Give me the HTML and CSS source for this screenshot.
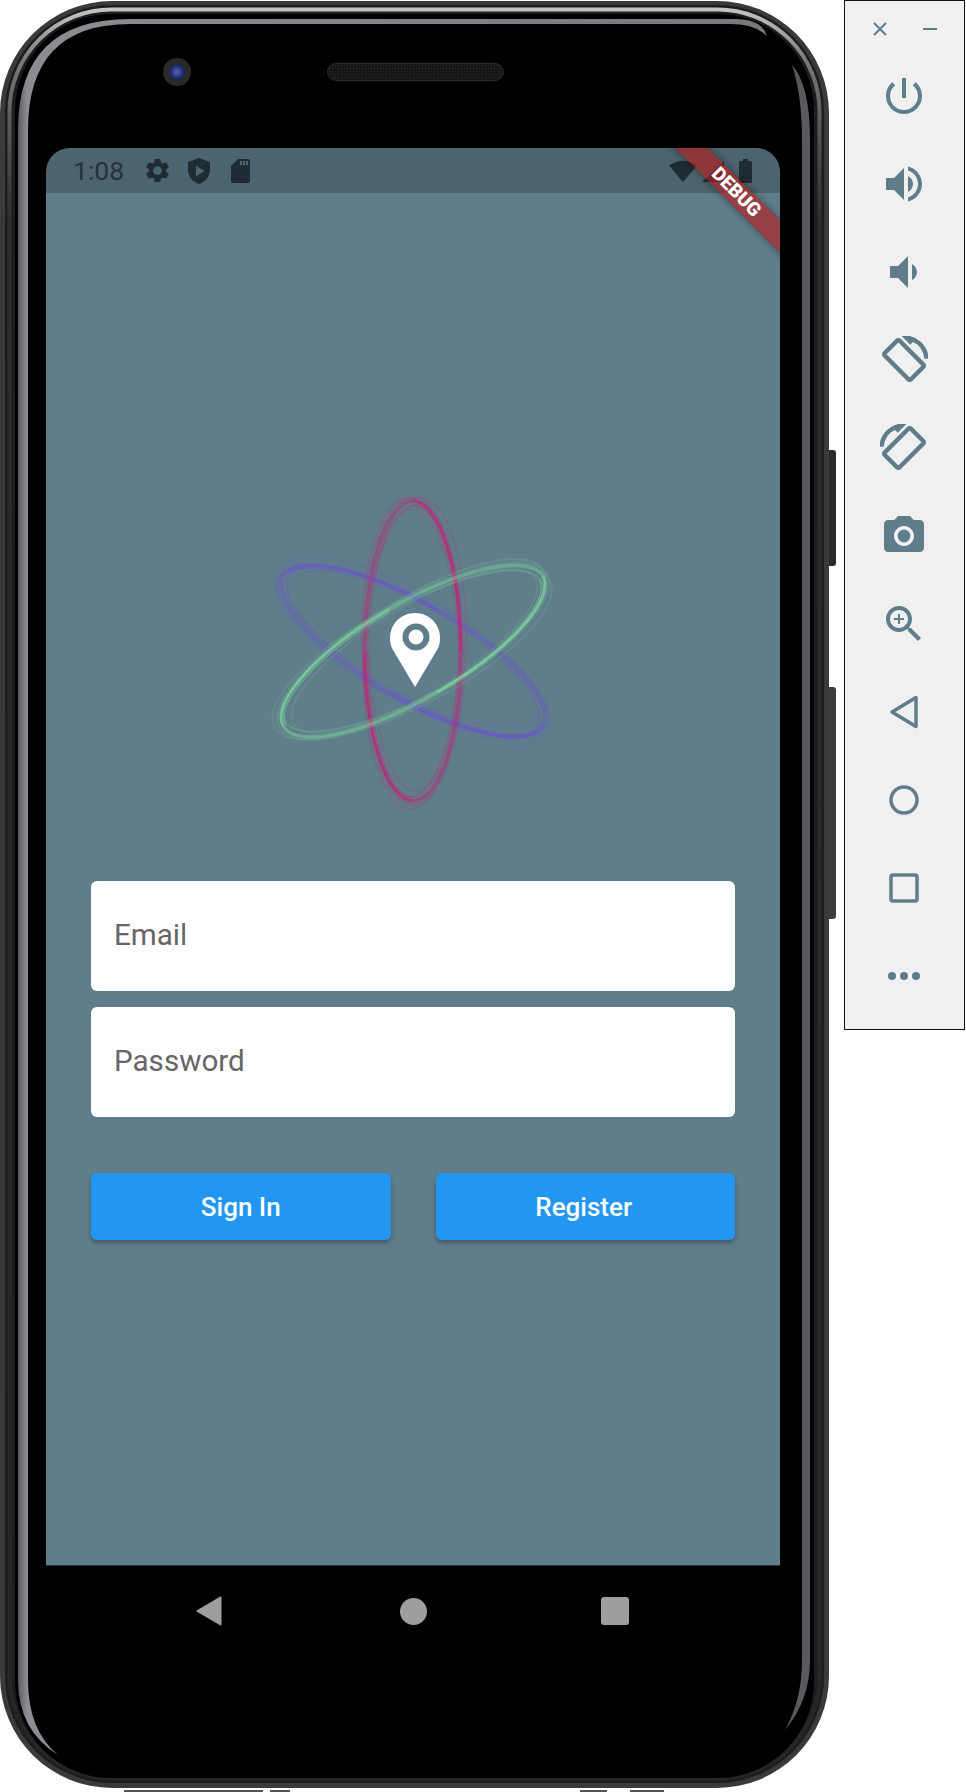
FILE: index.html
```html
<!DOCTYPE html>
<html lang="en">

<head>
  <meta charset="UTF-8">
  <meta name="viewport" content="width=device-width, initial-scale=1.0">
  <title>Login</title>
  <link rel="stylesheet" href="styles.css">
</head>

<body>
  <div class="phone">
    <span class="side-btn side-btn-power"></span>
    <span class="side-btn side-btn-volume"></span>
    <div class="ports">
      <span class="port port-long"></span>
      <span class="port"></span>
      <span class="port port-gap"></span>
      <span class="port port-last"></span>
    </div>

    <!-- Phone body and its edge highlights -->
    <svg class="bezel" width="830" height="1790" viewBox="0 0 830 1790">
      <defs>
        <linearGradient id="edge" x1="0" y1="0" x2="0" y2="1">
          <stop offset="0" stop-color="#c4c4c8" />
          <stop offset="0.03" stop-color="#77777b" />
          <stop offset="0.12" stop-color="#2c2c2c" />
          <stop offset="1" stop-color="#262626" />
        </linearGradient>
        <linearGradient id="rim" x1="0" y1="0" x2="1" y2="0">
          <stop offset="0" stop-color="#5c5c60" />
          <stop offset="0.012" stop-color="#8c8c92" />
          <stop offset="1" stop-color="#78787c" />
        </linearGradient>
      </defs>
      <rect x="0" y="1" width="829" height="1787" rx="112" fill="#3a3a3a" />
      <rect x="5" y="5" width="819" height="1778" rx="107" fill="#1d1d1d" />
      <rect x="9.5" y="9.5" width="810" height="1769" rx="102" fill="none" stroke="url(#edge)" stroke-width="4" />
      <rect x="15" y="14" width="799" height="1764" rx="96" fill="#000" />
      <path fill="url(#rim)" d="M18 1680V130Q18 19 130 19H735Q762 19 767 36Q755 24 730 24H130Q28 24 28 130V1680Q28 1730 58 1755Q18 1730 18 1680Z" />
      <path fill="#5a5a5e" d="M792 65Q810 85 810 140V1660Q810 1700 785 1730Q802 1700 802 1660V140Q802 95 792 65Z" />
    </svg>

    <div class="phone-top">
      <div class="camera"><span class="lens"></span></div>
      <div class="speaker"></div>
    </div>

    <div class="screen">
      <div class="status-bar">
        <span class="time">1:08</span>
        <svg class="status-icon gear" viewBox="0 0 24 24">
          <path d="M19.14 12.94c.04-.3.06-.61.06-.94 0-.32-.02-.64-.07-.94l2.03-1.58c.18-.14.23-.41.12-.61l-1.92-3.32c-.12-.22-.37-.29-.59-.22l-2.39.96c-.5-.38-1.03-.7-1.62-.94l-.36-2.54c-.04-.24-.24-.41-.48-.41h-3.84c-.24 0-.43.17-.47.41l-.36 2.54c-.59.24-1.13.57-1.62.94l-2.39-.96c-.22-.08-.47 0-.59.22L2.74 8.87c-.12.21-.08.47.12.61l2.03 1.58c-.05.3-.09.63-.09.94s.02.64.07.94l-2.03 1.58c-.18.14-.23.41-.12.61l1.92 3.32c.12.22.37.29.59.22l2.39-.96c.5.38 1.03.7 1.62.94l.36 2.54c.05.24.24.41.48.41h3.84c.24 0 .44-.17.47-.41l.36-2.54c.59-.24 1.13-.56 1.62-.94l2.39.96c.22.08.47 0 .59-.22l1.92-3.32c.12-.22.07-.47-.12-.61l-2.01-1.58zM12 15.6c-1.98 0-3.6-1.62-3.6-3.6s1.62-3.6 3.6-3.6 3.6 1.62 3.6 3.6-1.62 3.6-3.6 3.6z" />
        </svg>
        <svg class="status-icon shield" viewBox="0 0 22 26">
          <path fill-rule="evenodd" d="M11 0L22 4V12C22 19 17 24 11 26C5 24 0 19 0 12V4ZM8 7.5V18.5L16.5 13Z" />
        </svg>
        <svg class="status-icon sd" viewBox="0 0 19 24">
          <path fill-rule="evenodd" d="M7 0H17Q19 0 19 2V22Q19 24 17 24H2Q0 24 0 22V7ZM9 2V6H11V2ZM12 2V6H14V2ZM15 2V6H17V2Z" />
        </svg>
        <div class="status-right">
          <svg class="status-icon wifi" viewBox="0 0 28 22">
            <path d="M0 5.500Q14 -4 28 5.500L14 22Z" />
          </svg>
          <svg class="status-icon signal" viewBox="0 0 22 22">
            <path d="M0 22L22 1V22Z" />
          </svg>
          <svg class="status-icon battery" viewBox="0 0 13 24">
            <path d="M4 0H9V2H11.500Q13 2 13 3.500V22.500Q13 24 11.500 24H1.500Q0 24 0 22.500V3.500Q0 2 1.500 2H4Z" />
          </svg>
        </div>
      </div>

      <div class="banner">DEBUG</div>

      <div class="content">
        <svg class="logo" width="320" height="330" viewBox="0 0 320 330">
          <defs>
            <g id="orbit" fill="none">
              <ellipse cx="160" cy="165" rx="50" ry="154" stroke-opacity="0.14" stroke-width="3" />
              <ellipse cx="162" cy="167" rx="51" ry="156" stroke-opacity="0.14" stroke-width="2" transform="rotate(2 160 165)" />
              <ellipse cx="158" cy="163" rx="49" ry="151" stroke-opacity="0.18" stroke-width="2" transform="rotate(-1.500 160 165)" />
              <ellipse cx="160" cy="165" rx="46" ry="146" stroke-opacity="0.22" stroke-width="2" transform="rotate(1.500 160 165)" />
              <ellipse cx="161" cy="164" rx="44" ry="141" stroke-opacity="0.16" stroke-width="1.500" transform="rotate(-1 160 165)" />
              <ellipse cx="160" cy="165" rx="48" ry="150" stroke-opacity="0.4" stroke-width="3.500" />
              <ellipse cx="160" cy="165" rx="48" ry="150" stroke-opacity="0.55" stroke-width="2" pathLength="100" stroke-dasharray="25 25" stroke-dashoffset="25" />
              <ellipse cx="161" cy="166" rx="46" ry="146" stroke-opacity="0.55" stroke-width="1" pathLength="100" stroke-dasharray="25 25" stroke-dashoffset="25" />
            </g>
          </defs>
          <use href="#orbit" class="orbit-purple" transform="rotate(-60 160 165)" />
          <use href="#orbit" class="orbit-pink" />
          <use href="#orbit" class="orbit-green" transform="rotate(60 160 165)" />
          <path fill="#fff" d="M162 127C148 127 137 138 137 152C137 157 138 160 140 164L162 201L184 164C186 160 187 157 187 152C187 138 176 127 162 127Z" />
          <circle cx="163" cy="151" r="10.500" fill="#fff" stroke="#607d8b" stroke-width="6" />
        </svg>

        <form class="login-form">
          <input class="field" type="text" placeholder="Email">
          <input class="field" type="password" placeholder="Password">
          <div class="actions">
            <button class="action" type="button">Sign In</button>
            <button class="action" type="button">Register</button>
          </div>
        </form>
      </div>
    </div>

    <div class="nav-bar">
      <svg class="nav-icon nav-back" viewBox="0 0 26 30">
        <path d="M24.500 1.500V28.500L1.500 15Z" stroke="#9e9e9e" stroke-width="2" stroke-linejoin="round" />
      </svg>
      <span class="nav-home"></span>
      <span class="nav-recent"></span>
    </div>
  </div>

  <div class="toolbar">
    <div class="toolbar-head">
      <svg class="tool-small" viewBox="0 0 16 16">
        <path d="M2 2L14 14M14 2L2 14" />
      </svg>
      <svg class="tool-small" viewBox="0 0 16 16">
        <path d="M1 8H15" />
      </svg>
    </div>
    <svg class="tool" viewBox="0 0 24 24">
      <path d="M13 3h-2v10h2V3zm4.830 2.170l-1.420 1.420C17.990 7.860 19 9.810 19 12c0 3.870-3.130 7-7 7s-7-3.130-7-7c0-2.190 1.010-4.140 2.580-5.420L6.170 5.170C4.230 6.820 3 9.260 3 12c0 4.970 4.030 9 9 9s9-4.030 9-9c0-2.740-1.230-5.180-3.170-6.830z" />
    </svg>
    <svg class="tool" viewBox="0 0 24 24">
      <path d="M3 9v6h4l5 5V4L7 9H3zm13.500 3c0-1.770-1.020-3.290-2.500-4.030v8.050c1.480-.73 2.500-2.250 2.500-4.020zM14 3.230v2.060c2.890.86 5 3.540 5 6.710s-2.110 5.850-5 6.710v2.060c4.010-.91 7-4.490 7-8.770s-2.990-7.860-7-8.770z" />
    </svg>
    <svg class="tool" viewBox="0 0 24 24">
      <path d="M18.500 12c0-1.770-1.020-3.290-2.500-4.030v8.050c1.480-.73 2.500-2.250 2.500-4.020zM5 9v6h4l5 5V4L9 9H5z" />
    </svg>
    <svg class="tool tool-rotate" viewBox="0 0 24 24">
      <path d="M16.480 2.520c3.270 1.550 5.610 4.720 5.970 8.480h1.500C23.440 4.840 18.290 0 12 0l-.66.030 3.810 3.810 1.330-1.320zm-6.250-.77c-.59-.59-1.540-.59-2.120 0L1.750 8.110c-.59.59-.59 1.540 0 2.120l12.020 12.020c.59.59 1.540.59 2.120 0l6.360-6.360c.59-.59.59-1.540 0-2.120L10.230 1.750zm4.600 19.440L2.810 9.170l6.360-6.360 12.020 12.020-6.360 6.360z" />
    </svg>
    <svg class="tool tool-rotate tool-flip" viewBox="0 0 24 24">
      <path d="M16.480 2.520c3.270 1.550 5.610 4.720 5.970 8.480h1.500C23.440 4.840 18.290 0 12 0l-.66.030 3.810 3.810 1.330-1.320zm-6.250-.77c-.59-.59-1.540-.59-2.120 0L1.750 8.110c-.59.59-.59 1.540 0 2.120l12.020 12.020c.59.59 1.540.59 2.120 0l6.360-6.360c.59-.59.59-1.540 0-2.120L10.230 1.750zm4.600 19.440L2.810 9.170l6.360-6.360 12.020 12.020-6.360 6.360z" />
    </svg>
    <svg class="tool" viewBox="0 0 24 24">
      <circle cx="12" cy="12" r="3.200" />
      <path d="M9 2L7.170 4H4c-1.100 0-2 .9-2 2v12c0 1.100.9 2 2 2h16c1.100 0 2-.9 2-2V6c0-1.100-.9-2-2-2h-3.170L15 2H9zm3 15c-2.760 0-5-2.240-5-5s2.240-5 5-5 5 2.240 5 5-2.240 5-5 5z" />
    </svg>
    <svg class="tool" viewBox="0 0 24 24">
      <path d="M15.500 14h-.79l-.28-.27C15.410 12.590 16 11.110 16 9.500 16 5.910 13.090 3 9.500 3S3 5.910 3 9.500 5.910 16 9.500 16c1.610 0 3.090-.59 4.230-1.570l.27.28v.79l5 4.990L20.490 19l-4.990-5zm-6 0C7.010 14 5 11.990 5 9.500S7.010 5 9.500 5 14 7.010 14 9.500 11.990 14 9.500 14z" />
      <path d="M12 10h-2v2H9v-2H7V9h2V7h1v2h2v1z" />
    </svg>
    <svg class="tool tool-line" viewBox="0 0 48 48">
      <path d="M36 9.500V38.500L12 24Z" />
    </svg>
    <svg class="tool tool-line" viewBox="0 0 48 48">
      <circle cx="24" cy="24" r="13" />
    </svg>
    <svg class="tool tool-line" viewBox="0 0 48 48">
      <rect x="11" y="11" width="26" height="26" rx="2" />
    </svg>
    <svg class="tool" viewBox="0 0 48 48">
      <circle cx="12" cy="24" r="4" />
      <circle cx="24" cy="24" r="4" />
      <circle cx="36" cy="24" r="4" />
    </svg>
  </div>
</body>

</html>
```

FILE: styles.css
```css
body {
  margin: 0;
  width: 966px;
  height: 1792px;
  overflow: hidden;
  display: flex;
  align-items: flex-start;
  background-color: #fff;
  font-family: Roboto, "Liberation Sans", sans-serif;
}

.phone {
  position: relative;
  flex: none;
  width: 829px;
  height: 1788px;
  margin-right: 15px;
  display: flex;
  flex-direction: column;
}

.bezel {
  position: absolute;
  left: 0;
  top: 0;
}

.side-btn {
  position: absolute;
  left: 826px;
  width: 10px;
  border-radius: 0 3px 3px 0;
  background-color: #2b2b2b;
}

.side-btn-power {
  top: 450px;
  height: 116px;
}

.side-btn-volume {
  top: 687px;
  height: 232px;
  background-color: #3d3d3d;
}

.ports {
  position: absolute;
  left: 124px;
  top: 1790px;
  display: flex;
}

.port {
  width: 20px;
  height: 2px;
  margin-left: 7px;
  background-color: #555;
}

.port-long {
  width: 139px;
  margin-left: 0;
}

.port-gap {
  width: 27px;
  margin-left: 290px;
}

.port-last {
  width: 34px;
  margin-left: 23px;
}

.phone-top {
  position: relative;
  flex: none;
  height: 148px;
  display: flex;
  align-items: flex-start;
  padding-left: 163px;
  box-sizing: border-box;
}

.camera {
  width: 28px;
  height: 28px;
  margin-top: 58px;
  border-radius: 50%;
  background-color: #2a2a2a;
  display: flex;
  align-items: center;
  justify-content: center;
}

.lens {
  width: 16px;
  height: 16px;
  border-radius: 50%;
  background: radial-gradient(circle at 50% 50%, #5668b8 0, #1f2a70 55%, #0a0d20 100%);
}

.speaker {
  width: 177px;
  height: 18px;
  margin: 63px 0 0 136px;
  border-radius: 9px;
  background-color: #161616;
  background-image: radial-gradient(circle, #2e2e2e 0.8px, transparent 1px);
  background-size: 3px 3px;
  border: 1px solid #2a2a2a;
  box-sizing: border-box;
}

.screen {
  position: relative;
  flex: none;
  width: 734px;
  height: 1418px;
  margin-left: 46px;
  border-radius: 24px 24px 0 0;
  border-bottom: 1px solid #26353d;
  box-sizing: border-box;
  overflow: hidden;
  background-color: #607d8b;
}

.status-bar {
  height: 45px;
  display: flex;
  align-items: center;
  padding: 0 28px 0 27px;
  box-sizing: border-box;
  background-color: rgba(0, 0, 0, 0.2);
}

.time {
  width: 50px;
  margin-right: 20px;
  font-size: 26.500px;
  color: #263238;
}

.status-icon {
  flex: none;
  fill: #1f2c33;
}

.gear {
  width: 29px;
  height: 29px;
  margin-right: 16px;
}

.shield {
  width: 22px;
  height: 26px;
  margin-right: 21px;
}

.sd {
  width: 19px;
  height: 24px;
}

.status-right {
  margin-left: auto;
  display: flex;
  align-items: center;
}

.wifi {
  width: 28px;
  height: 22px;
  margin-right: 5px;
}

.signal {
  width: 22px;
  height: 22px;
  margin-right: 15px;
}

.battery {
  width: 13px;
  height: 24px;
}

.banner {
  position: absolute;
  left: 590px;
  top: 33px;
  width: 200px;
  height: 22.600px;
  line-height: 22.600px;
  text-align: center;
  transform: rotate(45deg);
  background-color: rgba(183, 28, 28, 0.62);
  box-shadow: 0 0 9px rgba(0, 0, 0, 0.4);
  color: #fff;
  font-size: 19px;
  font-weight: 900;
}

.content {
  display: flex;
  flex-direction: column;
  align-items: center;
}

.logo {
  margin-top: 293px;
}

.orbit-pink {
  stroke: #c91f73;
}

.orbit-purple {
  stroke: #6a55cf;
}

.orbit-green {
  stroke: #7fdc9d;
}

.login-form {
  width: 644px;
  margin-top: 65px;
  display: flex;
  flex-direction: column;
  gap: 16px;
}

.field {
  height: 110px;
  padding: 0 23px 2px;
  border: none;
  border-radius: 6px;
  box-sizing: border-box;
  background-color: #fff;
  font-family: Roboto, "Liberation Sans", sans-serif;
  font-size: 29.600px;
}

.field::placeholder {
  color: #666;
  opacity: 1;
}

.actions {
  margin-top: 40px;
  display: flex;
  gap: 45px;
}

.action {
  flex: none;
  width: 299.500px;
  height: 67px;
  border: none;
  border-radius: 6px;
  background-color: #2196f3;
  box-shadow: 0 3px 4px rgba(0, 0, 0, 0.3);
  color: #fff;
  font-family: Roboto, "Liberation Sans", sans-serif;
  font-size: 26px;
  font-weight: 500;
}

.action:last-child {
  padding-right: 9px;
}

.nav-bar {
  position: relative;
  flex: none;
  height: 90px;
  display: flex;
  align-items: center;
  padding-left: 196px;
  box-sizing: border-box;
}

.nav-back {
  width: 26px;
  height: 30px;
  fill: #9e9e9e;
}

.nav-home {
  width: 27px;
  height: 27px;
  margin-left: 178px;
  border-radius: 50%;
  background-color: #9e9e9e;
}

.nav-recent {
  width: 28px;
  height: 28px;
  margin-left: 174px;
  border-radius: 3px;
  background-color: #9e9e9e;
}

.toolbar {
  flex: none;
  width: 121px;
  height: 1030px;
  padding: 10px 2px 0 0;
  border: 1.500px solid #111;
  box-sizing: border-box;
  display: flex;
  flex-direction: column;
  align-items: center;
  background-color: #f0f0f0;
}

.toolbar-head {
  flex: none;
  width: 66px;
  height: 36px;
  margin: 0 0 24.500px 2px;
  display: flex;
  align-items: center;
  justify-content: space-between;
}

.tool-small {
  width: 16px;
  height: 16px;
  fill: none;
  stroke: #607d8b;
  stroke-width: 2;
}

.tool {
  flex: none;
  width: 48px;
  height: 48px;
  margin-bottom: 40px;
  fill: #607d8b;
}

.tool:last-child {
  margin-bottom: 0;
}

.tool-rotate {
  stroke: #607d8b;
  stroke-width: 0.700;
}

.tool-flip {
  transform: scaleX(-1);
}

.tool-line {
  fill: none;
  stroke: #607d8b;
  stroke-width: 3.500;
  stroke-linejoin: round;
}
```
